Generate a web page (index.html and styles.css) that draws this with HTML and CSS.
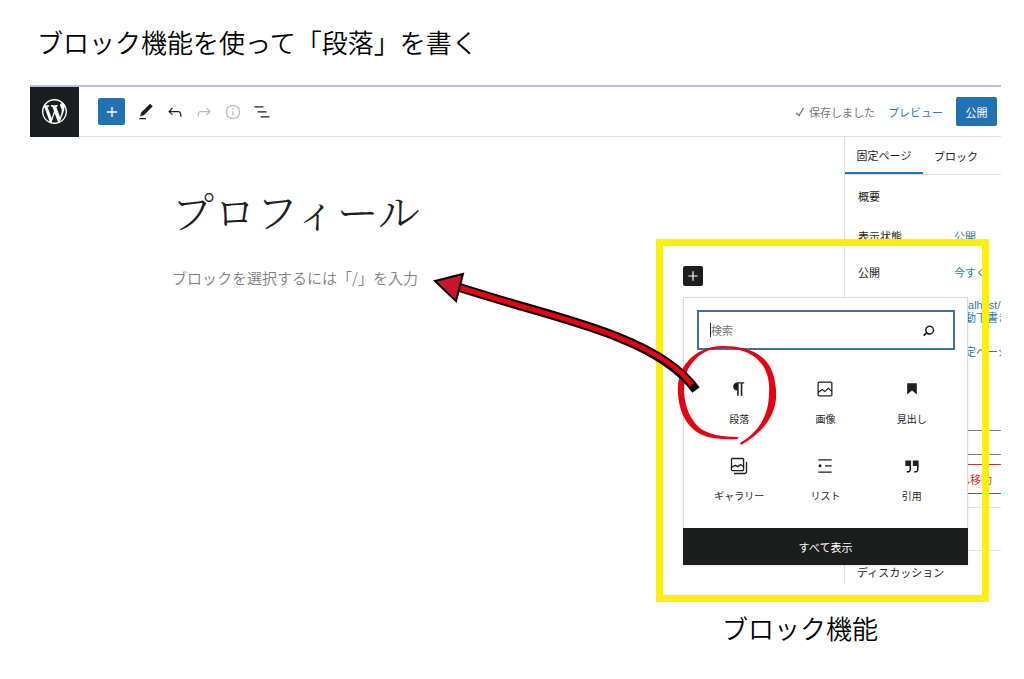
FILE: index.html
```html
<!DOCTYPE html>
<html lang="ja">
<head>
<meta charset="utf-8">
<title>ブロック機能を使って「段落」を書く</title>
<link rel="stylesheet" href="styles.css">
</head>
<body>
<main class="guide">
  <h1 class="guide-title">ブロック機能を使って「段落」を書く</h1>
  <div class="stage">
    <section class="editor">
      <header class="toolbar">
        <a class="logo" href="#" aria-label="WordPress">
          <svg viewBox="0 0 20 20"><path d="M20 10c0-5.51-4.49-10-10-10C4.48 0 0 4.49 0 10c0 5.52 4.48 10 10 10 5.51 0 10-4.48 10-10zM7.78 15.37L4.37 6.22c.55-.02 1.17-.08 1.17-.08.5-.06.44-1.13-.06-1.11 0 0-1.45.11-2.37.11-.18 0-.37 0-.58-.01C4.12 2.69 6.87 1.11 10 1.11c2.33 0 4.45.87 6.05 2.34-.68-.11-1.65.39-1.65 1.58 0 .74.45 1.36.9 2.1.35.61.55 1.36.55 2.46 0 1.49-1.4 5-1.4 5l-3.03-8.37c.54-.02.82-.17.82-.17.5-.05.44-1.25-.06-1.22 0 0-1.44.12-2.38.12-.87 0-2.33-.12-2.33-.12-.5-.03-.56 1.2-.06 1.22l.92.08 1.26 3.41zM17.41 10c.24-.64.74-1.87.43-4.25.7 1.29 1.05 2.71 1.05 4.25 0 3.29-1.73 6.24-4.4 7.78.97-2.59 1.94-5.2 2.92-7.78zM6.1 18.09C3.12 16.65 1.11 13.53 1.11 10c0-1.3.23-2.48.72-3.59C3.25 10.3 4.67 14.2 6.1 18.09zm4.03-6.63l2.58 6.98c-.86.29-1.76.45-2.71.45-.79 0-1.57-.11-2.29-.33.81-2.38 1.62-4.74 2.42-7.1z"/></svg>
        </a>
        <button class="add" aria-label="ブロックを追加"><svg viewBox="0 0 24 24"><path d="M18 11.2h-5.2V6h-1.6v5.2H6v1.6h5.2V18h1.6v-5.2H18z"/></svg></button>
        <div class="tools">
          <button class="tool" aria-label="編集"><svg viewBox="0 0 24 24"><path d="M20.1 5.1L16.9 2 6.2 12.7l-1.3 4.4 4.5-1.3L20.1 5.1zM4 20.8h8v-1.5H4v1.5z"/></svg></button>
          <button class="tool" aria-label="元に戻す"><svg viewBox="0 0 24 24"><path d="M18.3 11.7c-.6-.6-1.4-.9-2.3-.9H6.7l2.9-3.3-1.1-1-4.5 5L8.5 16l1-1-2.7-2.7H16c.5 0 .9.2 1.3.5 1 1 1 3.4 1 4.5v.3h1.5v-.2c0-1.5 0-4.3-1.5-5.7z"/></svg></button>
          <button class="tool faint" aria-label="やり直す"><svg viewBox="0 0 24 24"><path d="M15.6 6.5l-1.1 1 2.9 3.3H8c-.9 0-1.7.3-2.3.9-1.4 1.5-1.4 4.2-1.4 5.6v.2h1.5v-.3c0-1.1 0-3.5 1-4.5.3-.3.7-.5 1.3-.5h9.2L14.5 15l1.1 1.1 4.6-4.6-4.6-5z"/></svg></button>
          <button class="tool faint" aria-label="詳細"><svg viewBox="0 0 24 24"><circle cx="12" cy="12" r="8" fill="none" stroke="currentColor" stroke-width="1.6"/><path d="M11.2 11h1.6v5h-1.6zM11.2 7.8h1.6v1.7h-1.6z"/></svg></button>
          <button class="tool" aria-label="リスト表示"><svg viewBox="0 0 24 24"><path d="M13.8 5.2H3v1.5h10.8V5.2zm-3.6 12v1.5H21v-1.5H10.2zm7.2-6H6.6v1.5h10.8v-1.5z"/></svg></button>
        </div>
        <div class="actions">
          <span class="saved"><svg viewBox="0 0 24 24"><path d="M4 14l6 5 9-15" fill="none" stroke="currentColor" stroke-width="2.8"/></svg>保存しました</span>
          <a class="preview" href="#">プレビュー</a>
          <button class="publish">公開</button>
        </div>
      </header>
      <div class="workspace">
        <article class="canvas">
          <h2 class="post-title">プロフィール</h2>
          <p class="prompt">ブロックを選択するには「/」を入力</p>
        </article>
        <aside class="sidebar">
          <nav class="tabs">
            <button class="tab active">固定ページ</button>
            <button class="tab">ブロック</button>
          </nav>
          <h3 class="panel-title">概要</h3>
          <div class="row"><span>表示状態</span><a href="#">公開</a></div>
          <div class="row"><span>公開</span><a href="#">今すぐ</a></div>
          <div class="links">
            <a href="#">localhost/<br>自動下書き</a>
            <a href="#">固定ページ</a>
          </div>
          <input class="author" type="text" aria-label="投稿者">
          <button class="trash">ゴミ箱へ移動</button>
          <div class="panel-gap"></div>
          <h3 class="discussion">ディスカッション</h3>
        </aside>
      </div>
    </section>

    <div class="frame">
      <button class="inserter" aria-label="ブロックを追加"><svg viewBox="0 0 24 24"><path d="M20 11H13V4h-2v7H4v2h7v7h2v-7h7z"/></svg></button>
      <div class="popover">
        <label class="search">
          <span class="caret"></span>
          <input type="text" placeholder="検索" aria-label="検索">
          <svg viewBox="0 0 24 24"><path d="M13.5 5.6a5.9 5.9 0 0 0-5 9L5.1 17.7l1.5 1.6 3.3-3a5.9 5.9 0 1 0 3.6-10.7zm0 9.8a3.9 3.9 0 1 1 0-7.8 3.9 3.9 0 0 1 0 7.8z"/></svg>
        </label>
        <div class="blocks">
          <button class="block"><svg viewBox="0 0 24 24"><path d="M18.3 4H9.9v-.1l-.9.2c-2.3.4-4 2.4-4 4.8s1.700 4.400 4 4.800l.7.1V20h1.900V5.500h2.500V20H16V5.500h2.300V4z"/></svg>段落</button>
          <button class="block"><svg viewBox="0 0 24 24"><path d="M19 3H5c-1.100 0-2 .9-2 2v14c0 1.100.9 2 2 2h14c1.100 0 2-.9 2-2V5c0-1.100-.9-2-2-2zM5 4.500h14c.3 0 .5.2.5.5v8.400l-3-2.900c-.3-.3-.8-.3-1 0L11.900 14 9 12c-.3-.2-.6-.2-.8 0l-3.700 2.600V5c0-.3.2-.5.5-.5zm14 15H5c-.3 0-.5-.2-.5-.5v-2.400l4.100-3 3 1.900c.3.2.7.2.9-.1L16 12l3.500 3.400V19c0 .3-.2.5-.5.5z"/></svg>画像</button>
          <button class="block"><svg viewBox="0 0 24 24"><path d="M6.200 5.200v13.400l5.800-4.800 5.800 4.800V5.200z"/></svg>見出し</button>
          <button class="block"><svg viewBox="0 0 24 24"><g fill="none" stroke="currentColor" stroke-width="1.600"><rect x="3" y="3" width="14.500" height="14.500" rx="1.200"/><path d="M3 13.500l4.500-2.300 3 1.600 3.500-2.500 3.500 2.600M21 7v12a2 2 0 0 1-2 2H6"/></g></svg>ギャラリー</button>
          <button class="block"><svg viewBox="0 0 24 24"><path d="M4 4v1.500h16V4zM12 11h8v1.500h-8zM4 18.500h16V20H4z"/><circle cx="6" cy="11.800" r="1.800"/></svg>リスト</button>
          <button class="block"><svg viewBox="0 0 24 24"><path d="M13 5.500v6.500h5v4c0 .8-.2 1.300-.5 1.600-.6.6-1.600.6-2.500.5h-.3V20h.5c1 0 2.500-.1 3.500-1 .6-.6 1.200-1.600 1.200-3V5.500zM4 5.500V12h5v4c0 .8-.2 1.300-.5 1.600-.6.6-1.600.6-2.500.5h-.3V20h.5c1 0 2.500-.1 3.500-1 .6-.6 1.200-1.600 1.200-3V5.500z"/></svg>引用</button>
        </div>
        <button class="show-all">すべて表示</button>
      </div>
    </div>

    <svg class="marks" viewBox="430 265 350 185" aria-hidden="true">
      <path fill="#e60012" d="M741 445C752 439 760 432 766 424C774 413 777 402 776 390C775 376 771 365 763 358C753 349 738 346 723 346C708 346 696 352 688 361C680 370 677 382 678 394C679 409 684 421 693 429C702 437 714 440 737 439L739 437C720 437 709 434 701 429C690 420 685 407 684 392C684 379 686 370 693 362C701 352 711 348 723 348C738 348 751 352 759 361C767 369 770 381 769 393C769 405 766 415 761 423C756 431 750 437 740 443Z"/>
      <path d="M458 287C530 310 580 321 620 338C655 352 680 368 696 390" fill="none" stroke="#000" stroke-width="9"/>
      <path d="M458 287C530 310 580 321 620 338C655 352 679 367 692 385" fill="none" stroke="#e60012" stroke-width="5"/>
      <path d="M435 281L463 274L456 301Z" fill="#c7162b" stroke="#000" stroke-width="2"/>
    </svg>
  </div>
  <p class="caption">ブロック機能</p>
</main>
</body>
</html>
```
FILE: styles.css
```css
* { box-sizing: border-box; }

body {
  margin: 0;
  background: #fff;
  color: #1e1e1e;
  font-family: "Noto Sans CJK JP", sans-serif;
  font-size: 11px;
}

h1, h2, h3, p { margin: 0; font-weight: 400; }

button, input { font: inherit; color: inherit; }

button {
  display: flex;
  align-items: center;
  justify-content: center;
  padding: 0;
  border: 0;
  background: none;
}

a { color: #2e7ab0; text-decoration: none; }

svg { display: block; width: 20px; height: 20px; fill: currentColor; flex: none; }

.guide { padding: 23px 23px 24px 30px; }

.guide-title, .caption {
  color: #000;
  font-size: 26px;
  font-weight: 350;
  line-height: 38px;
}

.guide-title { padding-left: 7px; margin-bottom: 24px; }

.caption { margin: 26px 123px 0 0; text-align: right; }

.stage { position: relative; }

.editor { border-top: 2px solid #b5c0e2; }

.toolbar {
  display: flex;
  align-items: center;
  height: 50px;
  border-bottom: 1px solid #e0e0e0;
}

.logo {
  display: flex;
  align-items: center;
  justify-content: center;
  width: 49px;
  height: 50px;
  background: #1b1e1e;
  color: #fff;
}

.logo svg { width: 25px; height: 25px; }

.add {
  width: 27px;
  height: 27px;
  margin-left: 19px;
  border-radius: 2px;
  background: #2271b1;
  color: #fff;
}

.tools { display: flex; margin-left: 6px; }

.tool { width: 29px; height: 29px; }

.faint { color: #bbb; }

.actions {
  display: flex;
  align-items: center;
  gap: 13px;
  margin-left: auto;
  padding-right: 4px;
  line-height: 16px;
}

.saved { display: flex; align-items: center; gap: 3px; color: #757575; }

.saved svg { width: 12px; height: 12px; }

.publish {
  width: 41px;
  height: 29px;
  border-radius: 2px;
  background: #2271b1;
  color: #fff;
}

.workspace {
  display: grid;
  grid-template-columns: minmax(0, 1fr) 157px;
}

.canvas { padding: 48px 0 0 142px; }

.post-title {
  font-family: "Noto Serif CJK JP", "Noto Sans CJK JP", serif;
  font-size: 42px;
  font-weight: 300;
  line-height: 50px;
}

.prompt {
  margin-top: 32px;
  color: #808080;
  font-size: 15px;
  font-weight: 350;
  line-height: 22px;
}

.sidebar {
  min-height: 446px;
  overflow: hidden;
  border-left: 1px solid #e0e0e0;
  white-space: nowrap;
}

.tabs { display: flex; border-bottom: 1px solid #e0e0e0; }

.tab { height: 37px; padding: 0 11px; }

.active { width: 78px; border-bottom: 2px solid #2271b1; }

.panel-title { padding-left: 13px; font-size: 11px; line-height: 43px; }

.row {
  display: grid;
  grid-template-columns: 96px 1fr;
  padding-left: 13px;
  line-height: 36px;
}

.links {
  display: grid;
  gap: 21px;
  padding: 9px 0 71px 109px;
  font-family: "Liberation Sans", "Noto Sans CJK JP", sans-serif;
  line-height: 13px;
}

.author {
  display: block;
  width: 180px;
  height: 25px;
  margin-left: 13px;
  border: 1px solid #808080;
}

.trash {
  justify-content: flex-start;
  width: 180px;
  height: 30px;
  margin: 9px 0 0 13px;
  padding-left: 67px;
  border: 1px solid #cc3340;
  color: #cc3340;
}

.panel-gap {
  height: 44px;
  margin-top: 13px;
  border: solid #e0e0e0;
  border-width: 1px 0;
}

.discussion { padding-left: 12px; font-size: 11px; line-height: 42px; height: 32px; }

.frame {
  position: absolute;
  top: 154px;
  right: 12px;
  width: 333px;
  padding: 20px 14px 30px 20px;
  border: 7px solid #fff100;
}

.inserter {
  width: 20px;
  height: 20px;
  border-radius: 2px;
  background: #1e1e1e;
  color: #fff;
}

.inserter svg { width: 14px; height: 14px; }

.popover {
  margin-top: 11px;
  border: 1px solid #ddd;
  border-bottom: 0;
  background: #fff;
  box-shadow: 0 1px 3px rgba(0, 0, 0, 0.1);
}

.search {
  display: flex;
  align-items: center;
  height: 40px;
  margin: 12px 12px 0 13px;
  padding: 0 15px 0 11px;
  border: 2px solid #39749b;
}

.search input {
  flex: 1;
  min-width: 0;
  padding: 0;
  border: 0;
  outline: 0;
  background: none;
}

.search input::placeholder { color: #757575; }

.search svg { width: 19px; height: 19px; }

.caret { width: 1px; height: 14px; background: #1e1e1e; }

.blocks {
  display: grid;
  grid-template-columns: repeat(3, 1fr);
  padding: 14px 12px 10px;
}

.block {
  flex-direction: column;
  gap: 11px;
  height: 77px;
  font-size: 10px;
  line-height: 17px;
}

.show-all {
  width: calc(100% + 2px);
  height: 37px;
  margin: 0 -1px;
  background: #1c1d1d;
  color: #fff;
}

.marks {
  position: absolute;
  top: 180px;
  right: 221px;
  width: 350px;
  height: 185px;
  pointer-events: none;
}
```
